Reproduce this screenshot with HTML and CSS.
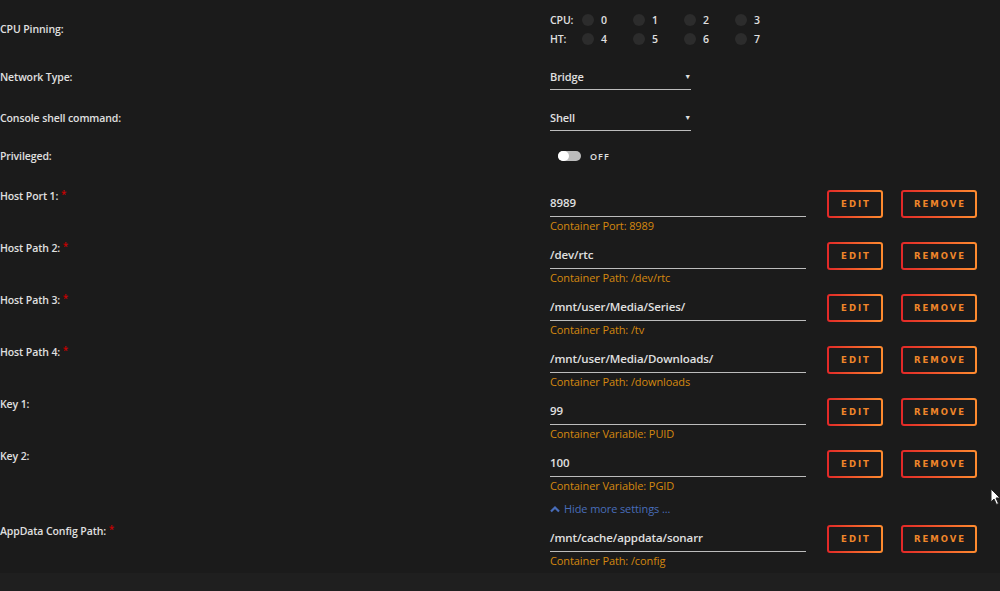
FILE: index.html
```html
<!DOCTYPE html>
<html lang="en">
<head>
    <meta charset="UTF-8">
    <title>Docker container settings</title>
    <link rel="stylesheet" href="styles.css">
</head>
<body>
    <div class="page">
        <div class="settings">
            <!-- cpu pinning -->
            <div class="row row-cpu">
                <div class="label">CPU Pinning:</div>
                <div class="field">
                    <div class="cpu-line">
                        <span class="cpu-name">CPU:</span>
                        <span class="cpu"><i class="dot"></i>0</span>
                        <span class="cpu"><i class="dot"></i>1</span>
                        <span class="cpu"><i class="dot"></i>2</span>
                        <span class="cpu"><i class="dot"></i>3</span>
                    </div>
                    <div class="cpu-line">
                        <span class="cpu-name">HT:</span>
                        <span class="cpu"><i class="dot"></i>4</span>
                        <span class="cpu"><i class="dot"></i>5</span>
                        <span class="cpu"><i class="dot"></i>6</span>
                        <span class="cpu"><i class="dot"></i>7</span>
                    </div>
                </div>
            </div>

            <div class="row row-network">
                <div class="label">Network Type:</div>
                <div class="field">
                    <div class="select">Bridge<span class="caret">&#9660;</span></div>
                </div>
            </div>

            <div class="row row-console">
                <div class="label">Console shell command:</div>
                <div class="field">
                    <div class="select">Shell<span class="caret">&#9660;</span></div>
                </div>
            </div>

            <div class="row row-priv">
                <div class="label">Privileged:</div>
                <div class="field">
                    <span class="switch"><i class="knob"></i></span>
                    <span class="switch-text">OFF</span>
                </div>
            </div>

            <!-- port / path / variable entries -->
            <div class="row entry first">
                <div class="label">Host Port 1: <span class="req">*</span></div>
                <div class="field">
                    <div class="input-group">
                        <div class="input">8989</div>
                        <div class="hint">Container Port: 8989</div>
                    </div>
                    <button class="btn btn-edit">EDIT</button>
                    <button class="btn btn-remove">REMOVE</button>
                </div>
            </div>

            <div class="row entry">
                <div class="label">Host Path 2: <span class="req">*</span></div>
                <div class="field">
                    <div class="input-group">
                        <div class="input">/dev/rtc</div>
                        <div class="hint">Container Path: /dev/rtc</div>
                    </div>
                    <button class="btn btn-edit">EDIT</button>
                    <button class="btn btn-remove">REMOVE</button>
                </div>
            </div>

            <div class="row entry">
                <div class="label">Host Path 3: <span class="req">*</span></div>
                <div class="field">
                    <div class="input-group">
                        <div class="input">/mnt/user/Media/Series/</div>
                        <div class="hint">Container Path: /tv</div>
                    </div>
                    <button class="btn btn-edit">EDIT</button>
                    <button class="btn btn-remove">REMOVE</button>
                </div>
            </div>

            <div class="row entry">
                <div class="label">Host Path 4: <span class="req">*</span></div>
                <div class="field">
                    <div class="input-group">
                        <div class="input">/mnt/user/Media/Downloads/</div>
                        <div class="hint">Container Path: /downloads</div>
                    </div>
                    <button class="btn btn-edit">EDIT</button>
                    <button class="btn btn-remove">REMOVE</button>
                </div>
            </div>

            <div class="row entry">
                <div class="label">Key 1:</div>
                <div class="field">
                    <div class="input-group">
                        <div class="input">99</div>
                        <div class="hint">Container Variable: PUID</div>
                    </div>
                    <button class="btn btn-edit">EDIT</button>
                    <button class="btn btn-remove">REMOVE</button>
                </div>
            </div>

            <div class="row entry">
                <div class="label">Key 2:</div>
                <div class="field">
                    <div class="input-group">
                        <div class="input">100</div>
                        <div class="hint">Container Variable: PGID</div>
                    </div>
                    <button class="btn btn-edit">EDIT</button>
                    <button class="btn btn-remove">REMOVE</button>
                </div>
            </div>

            <div class="row row-more">
                <div class="label"></div>
                <div class="field">
                    <a class="more" href="#">
                        <svg width="10" height="8" viewBox="0 0 10 8"><path d="M1 6.5 L5 2.5 L9 6.5" fill="none" stroke="#486dba" stroke-width="2.2"/></svg>
                        Hide more settings ...
                    </a>
                </div>
            </div>

            <div class="row entry last">
                <div class="label">AppData Config Path: <span class="req">*</span></div>
                <div class="field">
                    <div class="input-group">
                        <div class="input">/mnt/cache/appdata/sonarr</div>
                        <div class="hint">Container Path: /config</div>
                    </div>
                    <button class="btn btn-edit">EDIT</button>
                    <button class="btn btn-remove">REMOVE</button>
                </div>
            </div>
        </div>
        <div class="footer"></div>
    </div>

    <svg class="cursor" width="12" height="18" viewBox="0 0 12 18">
        <path d="M1 1 L1 14 L4 11 L6.5 16.5 L8.5 15.5 L6 10 L10 10 Z" fill="#fff" stroke="#222" stroke-width="1"/>
    </svg>
</body>
</html>
```

FILE: styles.css
```css
*{
    box-sizing: border-box;
}
body{
    margin: 0;
    background-color: #1b1b1b;
    color: #e0e0e0;
    font-family: "Open Sans", "Noto Sans", sans-serif;
    font-size: 10.5px;
    font-weight: 600;
    letter-spacing: -0.1px;
}
.page{
    display: flex;
    flex-direction: column;
    min-height: 100vh;
}
.settings{
    flex: 1;
}
.footer{
    height: 18px;
    background-color: #1f1f1f;
}
.row{
    display: grid;
    grid-template-columns: 550px 1fr;
}
.label{
    line-height: 14px;
}
.req{
    color: #c70000;
    font-size: 10px;
    position: relative;
    top: -2px;
}

/* cpu pinning */
.row-cpu{
    padding-top: 10px;
    align-items: center;
}
.cpu-line{
    display: flex;
    align-items: center;
    height: 19px;
}
.cpu-name{
    width: 32px;
}
.cpu{
    display: flex;
    align-items: center;
    width: 51px;
}
.dot{
    width: 12px;
    height: 12px;
    border-radius: 50%;
    background-color: #2c2c2c;
    margin-right: 7px;
}

/* dropdowns */
.row-network{
    margin-top: 16px;
    align-items: center;
}
.row-console{
    margin-top: 15px;
    align-items: center;
}
.select{
    position: relative;
    width: 141px;
    height: 26px;
    line-height: 26px;
    font-size: 11px;
    border-bottom: 1px solid #bdbdbd;
}
.caret{
    position: absolute;
    right: 0;
    top: 0;
    font-size: 7px;
}

/* switch */
.row-priv{
    margin-top: 14px;
    height: 22px;
    align-items: center;
}
.row-priv .field{
    display: flex;
    align-items: center;
}
.switch{
    position: relative;
    width: 23px;
    height: 10px;
    margin-left: 8px;
    border-radius: 5px;
    background-color: #bcbcbc;
}
.knob{
    position: absolute;
    left: 0;
    top: 0;
    width: 11px;
    height: 10px;
    border-radius: 5px;
    background-color: #fff;
}
.switch-text{
    margin-left: 9px;
    font-size: 9px;
    letter-spacing: 1px;
}

/* entries */
.entry{
    margin-bottom: 8px;
}
.entry.first{
    margin-top: 23px;
}
.entry.last{
    margin-bottom: 0;
}
.entry .label{
    margin-top: -1px;
}
.entry .field{
    display: flex;
    align-items: flex-start;
}
.input-group{
    width: 256px;
}
.input{
    height: 27px;
    line-height: 26px;
    font-size: 11.5px;
    border-bottom: 1px solid #bdbdbd;
}
.hint{
    margin-top: 1px;
    line-height: 16px;
    color: #d4880f;
    font-size: 11px;
    font-weight: 500;
}
.btn{
    height: 28px;
    margin: 0;
    padding: 0;
    border: 2px solid transparent;
    border-radius: 3px;
    background: linear-gradient(#1b1b1b, #1b1b1b) padding-box,
                linear-gradient(90deg, #e22828, #ff8c2f) border-box;
    color: #f0862a;
    font-family: "DejaVu Sans", sans-serif;
    font-size: 8.5px;
    font-weight: bold;
    letter-spacing: 2px;
    text-indent: 2px;
}
.btn-edit{
    width: 56px;
    margin-left: 21px;
}
.btn-remove{
    width: 76px;
    margin-left: 18px;
}

/* hide more settings */
.row-more{
    margin-top: -1px;
    margin-bottom: 8px;
}
.more{
    display: flex;
    align-items: center;
    gap: 4px;
    line-height: 16px;
    color: #486dba;
    font-size: 11px;
    text-decoration: none;
    font-weight: 500;
}

.cursor{
    position: absolute;
    left: 990px;
    top: 488px;
}
```
